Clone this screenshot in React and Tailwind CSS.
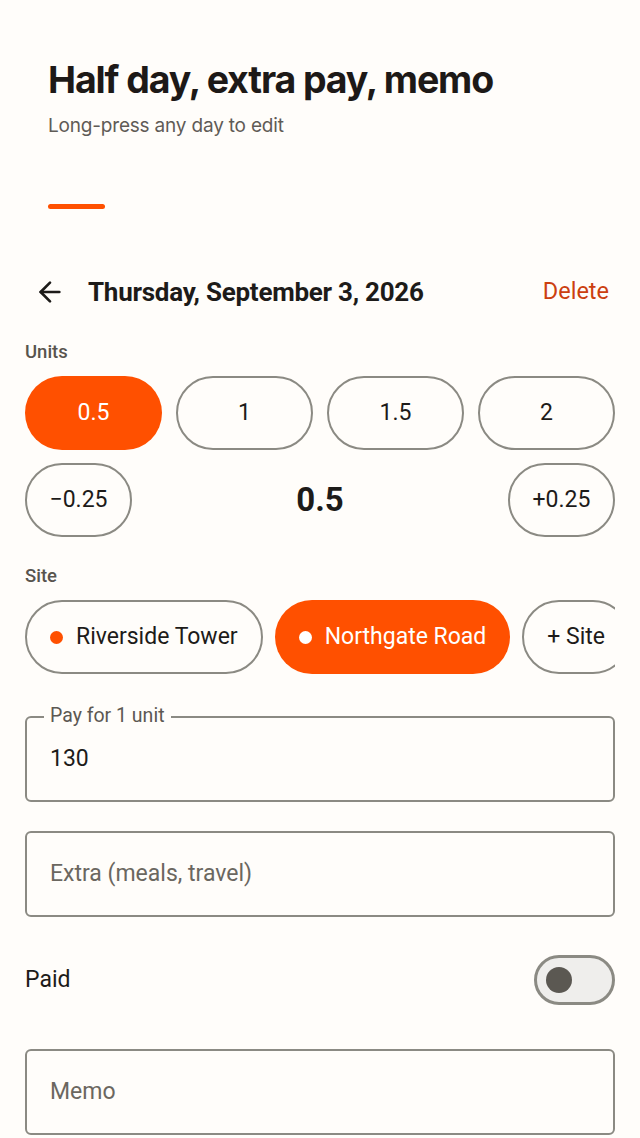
import { ArrowLeft } from 'lucide-react';

const units = ['0.5', '1', '1.5', '2'];

function Pill({ active, children, className = '' }) {
    return (
        <div
            className={
                'h-[74px] rounded-full flex items-center justify-center text-[23px] shrink-0 whitespace-nowrap ' +
                (active ? 'bg-[#ff5000] text-white' : 'border-2 border-[#8b8a83] text-[#1d1b19]') +
                ' ' + className
            }
        >
            {children}
        </div>
    );
}

function Field({ label, value, placeholder }) {
    return (
        <div className="relative h-[86px] rounded-[6px] border-2 border-[#8b8a83] flex items-center px-[23px] text-[23px]">
            {label && (
                <span className="absolute -top-[14px] left-[17px] px-[6px] leading-[24px] bg-[#fffdfa] text-[19.5px] text-[#5c5852]">
                    {label}
                </span>
            )}
            {value ? (
                <span className="text-[#1d1b19]">{value}</span>
            ) : (
                <span className="text-[#6b6760]">{placeholder}</span>
            )}
        </div>
    );
}

export default function App() {
    return (
        <div className="min-h-screen bg-[#fffdfa] font-['Roboto',sans-serif] text-[#1d1b19] overflow-hidden">
            <header className="px-[48px] pt-[58px] font-['Inter',sans-serif]">
                <h1 className="text-[37.5px] font-bold tracking-[-0.03em] leading-[44px] text-[#1d1917]">
                    Half day, extra pay, memo
                </h1>
                <p className="mt-[10px] text-[19px] leading-[28px] tracking-[-0.01em] text-[#5f5b56]">Long-press any day to edit</p>
                <div className="mt-[64px] h-[5px] w-[57px] rounded-full bg-[#ff5000]" />
            </header>

            <div className="px-[25px] mt-[63px]">
                <div className="flex items-center h-[40px]">
                    <ArrowLeft className="w-[32px] h-[32px] ml-[9px] text-[#1d1b19]" strokeWidth={2} />
                    <span className="ml-[22px] text-[26px] font-bold tracking-[-0.01em]">Thursday, September 3, 2026</span>
                    <span className="ml-auto mr-[6px] text-[23.5px] text-[#cc3f10]">Delete</span>
                </div>

                <div className="mt-[28px] leading-[24px] text-[18.5px] font-medium text-[#58544e]">Units</div>
                <div className="mt-[12px] grid grid-cols-4 gap-[14px]">
                    {units.map((u, i) => (
                        <Pill key={u} active={i === 0}>{u}</Pill>
                    ))}
                </div>
                <div className="mt-[13px] flex items-center justify-between">
                    <Pill className="w-[107px]">−0.25</Pill>
                    <span className="text-[33px] font-bold">0.5</span>
                    <Pill className="w-[107px]">+0.25</Pill>
                </div>

                <div className="mt-[27px] leading-[24px] text-[18.5px] font-medium text-[#58544e]">Site</div>
                <div className="mt-[12px] flex gap-[12px] overflow-hidden">
                    <Pill className="px-[23px] gap-[13px]">
                        <span className="w-[13px] h-[13px] rounded-full bg-[#ff5000]" />
                        Riverside Tower
                    </Pill>
                    <Pill active className="px-[24px] gap-[13px]">
                        <span className="w-[13px] h-[13px] rounded-full bg-white" />
                        Northgate Road
                    </Pill>
                    <Pill className="px-[23px]">+ Site</Pill>
                </div>

                <div className="mt-[42px]">
                    <Field label="Pay for 1 unit" value="130" />
                </div>
                <div className="mt-[29px]">
                    <Field placeholder="Extra (meals, travel)" />
                </div>

                <div className="mt-[38px] flex items-center justify-between h-[50px]">
                    <span className="text-[23px]">Paid</span>
                    <div className="w-[81px] h-[50px] rounded-full border-[3px] border-[#8b8a83] bg-[#efeeec] flex items-center pl-[9px]">
                        <span className="w-[26px] h-[26px] rounded-full bg-[#5b5852]" />
                    </div>
                </div>

                <div className="mt-[44px]">
                    <Field placeholder="Memo" />
                </div>
            </div>
        </div>
    );
}
